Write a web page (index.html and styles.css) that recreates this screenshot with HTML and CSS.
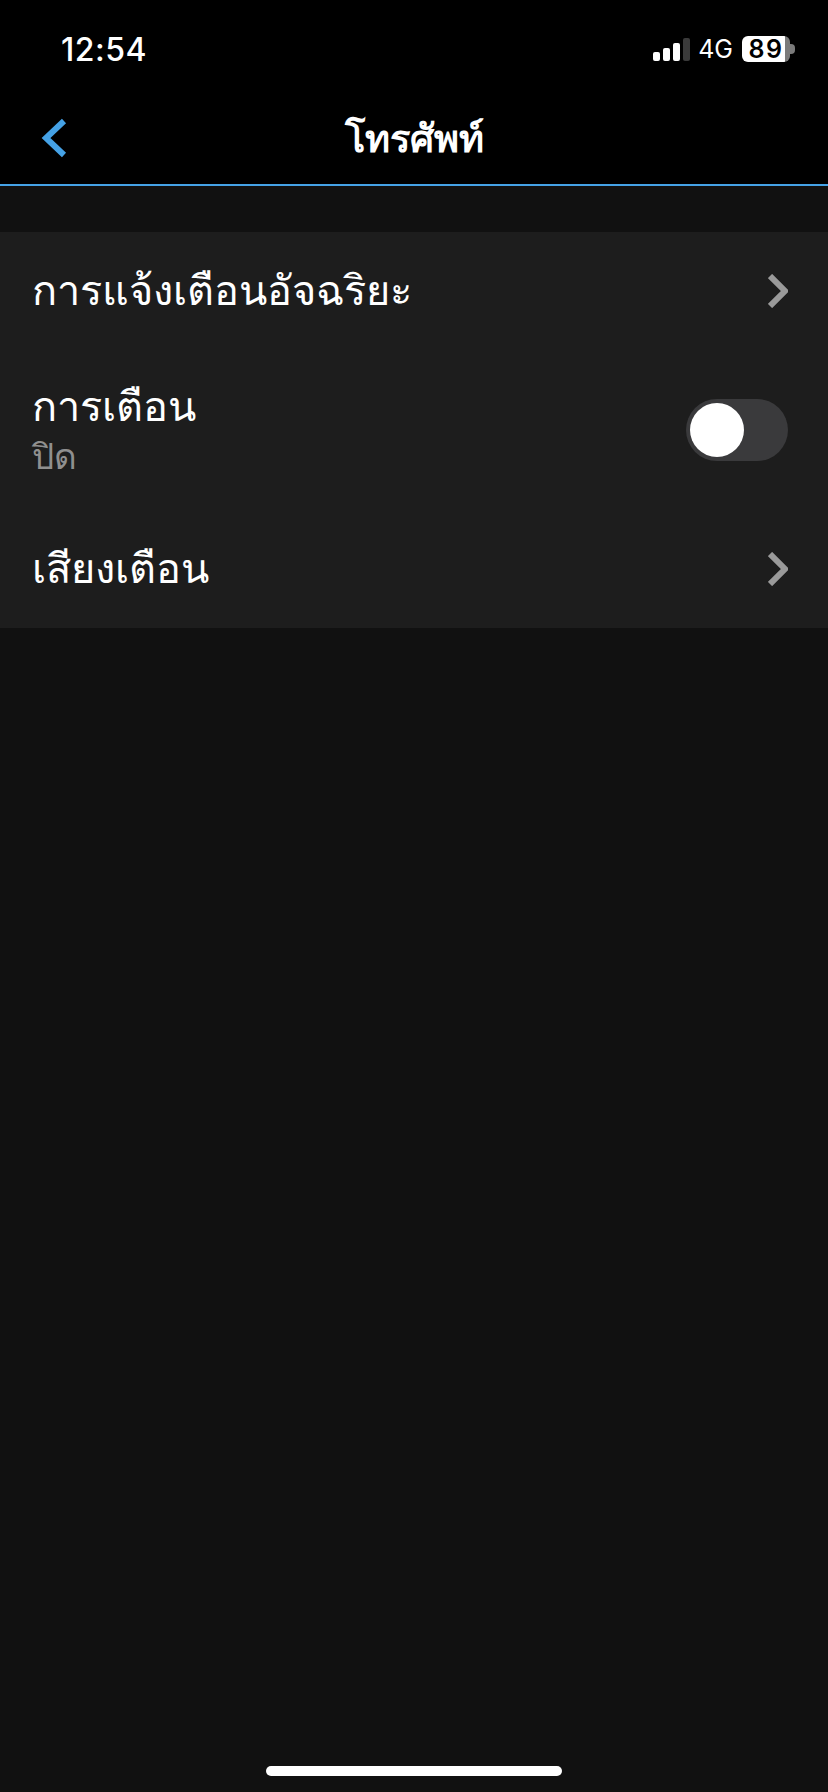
FILE: index.html
```html
<!DOCTYPE html>
<html lang="th">
<head>
    <meta charset="UTF-8">
    <meta name="viewport" content="width=device-width, initial-scale=1.0">
    <title>โทรศัพท์</title>
    <link rel="stylesheet" href="styles.css">
</head>
<body>
    <div class="top">
        <!-- status bar -->
        <div class="status-bar">
            <span class="time">12:54</span>
            <div class="status-right">
                <div class="signal">
                    <span class="bar bar1"></span>
                    <span class="bar bar2"></span>
                    <span class="bar bar3"></span>
                    <span class="bar bar4"></span>
                </div>
                <span class="network">4G</span>
                <div class="battery">
                    <div class="battery-body">89</div>
                    <span class="battery-nub"></span>
                </div>
            </div>
        </div>

        <div class="nav-bar">
            <svg class="back" width="26" height="40" viewBox="0 0 26 40">
                <path d="M23 3 L5 20 L23 37" fill="none" stroke="#45a2e6" stroke-width="6"/>
            </svg>
            <h1>โทรศัพท์</h1>
        </div>
    </div>

    <div class="list">
        <div class="row row-short">
            <span class="label">การแจ้งเตือนอัจฉริยะ</span>
            <svg class="chevron" width="20" height="34" viewBox="0 0 20 34">
                <path d="M2 2 L17 17 L2 32" fill="none" stroke="#9a9a9a" stroke-width="6"/>
            </svg>
        </div>
        <div class="row row-tall">
            <div class="row-text">
                <span class="label">การเตือน</span>
                <span class="sublabel">ปิด</span>
            </div>
            <div class="toggle"><span class="knob"></span></div>
        </div>
        <div class="row row-short">
            <span class="label">เสียงเตือน</span>
            <svg class="chevron" width="20" height="34" viewBox="0 0 20 34">
                <path d="M2 2 L17 17 L2 32" fill="none" stroke="#9a9a9a" stroke-width="6"/>
            </svg>
        </div>
    </div>

    <div class="home-bar"></div>
</body>
</html>
```

FILE: styles.css
```css
* {
    box-sizing: border-box;
}

body {
    margin: 0;
    height: 1792px;
    background: #111111;
    color: #ffffff;
    font-family: "Noto Sans", "Liberation Sans", sans-serif;
    display: flex;
    flex-direction: column;
    overflow: hidden;
}

.top {
    background: #000000;
    border-bottom: 2px solid #45a2e6;
    height: 186px;
}

/* status bar */
.status-bar {
    height: 98px;
    display: flex;
    justify-content: space-between;
    align-items: center;
    padding: 0 33px 0 61px;
}

.time {
    font-family: Inter, sans-serif;
    font-size: 32px;
    font-weight: 500;
    letter-spacing: 0.5px;
}

.status-right {
    display: flex;
    align-items: center;
}

.signal {
    display: flex;
    align-items: flex-end;
    gap: 3px;
    height: 23px;
    margin-right: 8px;
}

.bar {
    width: 7px;
    background: #ffffff;
    border-radius: 2px;
}

.bar1 { height: 9px; }
.bar2 { height: 13px; }
.bar3 { height: 18px; }
.bar4 { height: 23px; background: #3a3a3a; }

.network {
    font-family: Inter, sans-serif;
    font-size: 25px;
    margin-right: 9px;
}

.battery {
    display: flex;
    align-items: center;
}

.battery-body {
    width: 48px;
    height: 26px;
    border-radius: 6px;
    background: linear-gradient(90deg, #ffffff 90%, #7a7a7a 90%);
    color: #000000;
    font-family: Inter, sans-serif;
    font-size: 25px;
    font-weight: 600;
    line-height: 26px;
    letter-spacing: 1.5px;
    text-align: center;
}

.battery-nub {
    width: 5px;
    height: 10px;
    background: #7a7a7a;
    border-radius: 0 4px 4px 0;
}

.nav-bar {
    height: 86px;
    padding-bottom: 8px;
    position: relative;
    display: flex;
    align-items: center;
    justify-content: center;
}

.nav-bar h1 {
    margin: 0;
    font-size: 38px;
    font-weight: 700;
    line-height: 70px;
}

.back {
    position: absolute;
    left: 41px;
    top: 20px;
}

/* settings list */
.list {
    margin-top: 46px;
    background: #1d1d1d;
}

.row {
    display: flex;
    justify-content: space-between;
    align-items: center;
    padding: 0 40px 0 32px;
}

.row-short {
    height: 118px;
}

.row-short .label {
    padding-bottom: 4px;
}

.row-tall {
    height: 160px;
}

.row-text {
    display: flex;
    flex-direction: column;
    padding-bottom: 7px;
}

.label {
    font-size: 41.5px;
    line-height: 56px;
}

.sublabel {
    margin-top: 3px;
    font-size: 35px;
    line-height: 40px;
    color: #8f8f8f;
}

.toggle {
    width: 102px;
    height: 62px;
    padding: 4px;
    border-radius: 31px;
    background: #3a3a3c;
}

.knob {
    display: block;
    width: 54px;
    height: 54px;
    border-radius: 50%;
    background: #ffffff;
}

.home-bar {
    width: 296px;
    height: 10px;
    border-radius: 5px;
    background: #ffffff;
    margin: auto auto 16px;
}
```
